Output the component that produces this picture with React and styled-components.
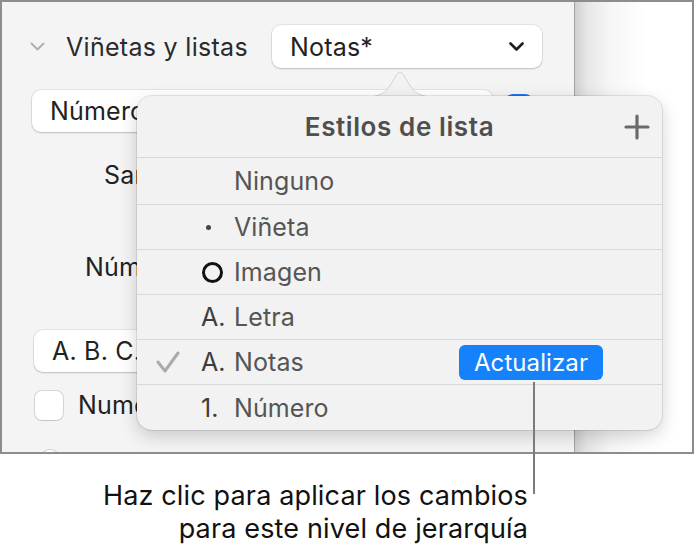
import React from 'react';
import styled, { createGlobalStyle } from 'styled-components';

const GlobalStyle = createGlobalStyle`
  html, body {
    margin: 0;
    padding: 0;
    background: #ffffff;
  }
  body {
    font-family: Inter, "Noto Sans", "Liberation Sans", sans-serif;
    -webkit-font-smoothing: antialiased;
  }
`;

const Page = styled.div`
  position: relative;
  width: 694px;
  height: 553px;
  overflow: hidden;
`;

const Frame = styled.div`
  box-sizing: border-box;
  width: 694px;
  height: 454px;
  border: 2px solid #8d8d8d;
  display: flex;
  overflow: hidden;
`;

const Sidebar = styled.div`
  width: 573px;
  flex: none;
  background: #f4f4f4;
  border-right: 1px solid #a3a3a3;
  padding-left: 28px;
  box-sizing: border-box;
  display: flex;
  flex-direction: column;
  color: #262626;
  font-size: 25px;
`;

const Canvas = styled.div`
  flex: 1;
  background: linear-gradient(90deg, #cfcfcf 0, #e6e6e6 10%, #f6f6f6 30%, #ffffff 60%);
`;

const Row = styled.div`
  margin-top: ${p => p.$mt}px;
  height: ${p => p.$h || 42}px;
  display: flex;
  align-items: center;
  padding-left: ${p => p.$pl || 0}px;
  flex: none;
  white-space: nowrap;
`;

const HeaderRow = styled(Row)`
  display: grid;
  grid-template-columns: 36px 206px 270px;
  align-items: center;
`;

const SectionTitle = styled.span`
  font-size: 25px;
  letter-spacing: 0.3px;
  color: #2b2b2b;
`;

const Dropdown = styled.div`
  box-sizing: border-box;
  height: ${p => p.$h || 43}px;
  width: ${p => p.$w}px;
  margin-left: ${p => p.$ml || 0}px;
  background: #ffffff;
  border-radius: 9px;
  box-shadow: 0 0 0 1px rgba(0, 0, 0, 0.06), 0 1px 2px rgba(0, 0, 0, 0.18);
  display: flex;
  align-items: center;
  justify-content: space-between;
  padding: 0 18px 0 18px;
  font-size: 25px;
  letter-spacing: 0.2px;
  color: #222;
  flex: none;
`;

const BlueWell = styled.div`
  width: 28px;
  height: 30px;
  margin-left: 12px;
  align-self: flex-start;
  margin-top: 4px;
  border-radius: 8px;
  background: #1f78f0;
`;

const Label = styled.span`
  font-size: 25px;
  letter-spacing: 0.2px;
  color: #222;
`;

const Checkbox = styled.div`
  box-sizing: border-box;
  width: 28px;
  height: 29px;
  margin-left: 5px;
  margin-right: 15px;
  border-radius: 7px;
  background: #fff;
  box-shadow: 0 0 0 1px rgba(0, 0, 0, 0.12), 0 1px 1px rgba(0, 0, 0, 0.08);
`;

const Radio = styled.div`
  box-sizing: border-box;
  width: 20px;
  height: 20px;
  margin-left: 10px;
  align-self: flex-start;
  border-radius: 50%;
  background: #fff;
  box-shadow: 0 0 0 1px rgba(0, 0, 0, 0.15);
`;

const Popover = styled.div`
  position: absolute;
  left: 137px;
  top: 96px;
  width: 525px;
  height: 334px;
  box-sizing: border-box;
  background: #f2f2f2;
  border-radius: 15px;
  box-shadow: 0 0 0 1px rgba(0, 0, 0, 0.09), 0 6px 18px rgba(0, 0, 0, 0.18);
  display: flex;
  flex-direction: column;
  overflow: hidden;
`;

const Arrow = styled.svg`
  position: absolute;
  left: 364px;
  top: 69px;
`;

const PopHeader = styled.div`
  height: 61px;
  flex: none;
  display: grid;
  grid-template-columns: 1fr auto 1fr;
  align-items: center;
`;

const PopTitle = styled.div`
  grid-column: 2;
  font-size: 26px;
  font-weight: 600;
  color: #4f4f4f;
  letter-spacing: 0.6px;
`;

const PlusButton = styled.svg`
  grid-column: 3;
  justify-self: end;
  margin-right: 12px;
`;

const StyleRow = styled.div`
  height: ${p => p.$h}px;
  flex: none;
  box-sizing: border-box;
  border-top: 1.5px solid #d8d8d8;
  display: grid;
  grid-template-columns: 64px 33px 1fr auto;
  align-items: center;
  font-size: 25px;
  letter-spacing: 0.1px;
  color: #555555;
`;

const CheckCell = styled.div`
  display: flex;
  justify-content: flex-end;
  padding-right: 21px;
`;

const Marker = styled.div`
  display: flex;
  align-items: center;
  color: #3d3d3d;
`;

const Bullet = styled.span`
  width: 5px;
  height: 5px;
  margin-left: 5px;
  border-radius: 50%;
  background: #444;
`;

const Ring = styled.span`
  box-sizing: border-box;
  width: 21px;
  height: 21px;
  margin-left: 1px;
  border-radius: 50%;
  border: 3px solid #111;
`;

const UpdateButton = styled.div`
  margin-right: 59px;
  width: 144px;
  height: 35px;
  border-radius: 6px;
  background: #1581fa;
  color: #fff;
  font-size: 24px;
  display: flex;
  align-items: center;
  justify-content: center;
`;

const Leader = styled.div`
  position: absolute;
  left: 533px;
  top: 382px;
  width: 1.5px;
  height: 112px;
  background: #7b7b7b;
`;

const Caption = styled.div`
  width: 528px;
  margin-top: 25px;
  text-align: right;
  font-size: 27px;
  line-height: 33px;
  letter-spacing: 0.15px;
  color: #111;
`;

const Chevron = ({ color, w = 15, sw = 2 }) => (
  <svg width={w} height={9} viewBox="0 0 15 9" fill="none">
    <polyline points="1.5,1.5 7.5,7.5 13.5,1.5" stroke={color} strokeWidth={sw} strokeLinecap="round" strokeLinejoin="round" />
  </svg>
);

const styles = [
  { name: 'Ninguno', h: 47 },
  { name: 'Viñeta', h: 45, marker: 'bullet' },
  { name: 'Imagen', h: 45, marker: 'ring' },
  { name: 'Letra', h: 45, marker: 'A.' },
  { name: 'Notas', h: 45, marker: 'A.', checked: true, update: true },
  { name: 'Número', h: 46, marker: '1.' },
];

export default function App() {
  return (
    <Page>
      <GlobalStyle />
      <Frame>
        <Sidebar>
          <HeaderRow $mt={23} $h={43}>
            <Chevron color="#b0b0b0" />
            <SectionTitle>Viñetas y listas</SectionTitle>
            <Dropdown $w={270}>
              <span>Notas*</span>
              <Chevron color="#1e1e1e" w={15} sw={2.6} />
            </Dropdown>
          </HeaderRow>
          <Row $mt={22}>
            <Dropdown $w={461} $h={42} $ml={2}>
              <span>Número</span>
            </Dropdown>
            <BlueWell />
          </Row>
          <Row $mt={22} $pl={74}>
            <Label>Sangría</Label>
          </Row>
          <Row $mt={50} $pl={55}>
            <Label>Número inicial</Label>
          </Row>
          <Row $mt={42}>
            <Dropdown $w={420} $h={42} $ml={4}>
              <span>A. B. C.</span>
            </Dropdown>
          </Row>
          <Row $mt={18} $h={30}>
            <Checkbox />
            <Label>Numeración por niveles</Label>
          </Row>
          <Row $mt={30} $h={20}>
            <Radio />
          </Row>
        </Sidebar>
        <Canvas />
      </Frame>

      <Arrow width="72" height="30" viewBox="0 0 72 30">
        <path d="M0 28 C14 28 20 25 25 18 L33 5 Q36 1 39 5 L47 18 C52 25 58 28 72 28 Z" fill="#f2f2f2" />
        <path d="M0 28 C14 28 20 25 25 18 L33 5 Q36 1 39 5 L47 18 C52 25 58 28 72 28" fill="none" stroke="rgba(0,0,0,0.13)" strokeWidth="1" />
      </Arrow>
      <Popover>
        <PopHeader>
          <PopTitle>Estilos de lista</PopTitle>
          <PlusButton width="26" height="26" viewBox="0 0 26 26">
            <path d="M13 2 V24 M2 13 H24" stroke="#6a6a6a" strokeWidth="3.2" strokeLinecap="round" />
          </PlusButton>
        </PopHeader>
        {styles.map(s => (
          <StyleRow key={s.name} $h={s.h}>
            <CheckCell>
              {s.checked && (
                <svg width="24" height="22" viewBox="0 0 24 22" fill="none">
                  <polyline points="2,11 9,20 22,2" stroke="#ababab" strokeWidth="3" strokeLinecap="round" strokeLinejoin="round" />
                </svg>
              )}
            </CheckCell>
            <Marker>
              {s.marker === 'bullet' && <Bullet />}
              {s.marker === 'ring' && <Ring />}
              {s.marker && s.marker.length === 2 && s.marker}
            </Marker>
            <span>{s.name}</span>
            {s.update ? <UpdateButton>Actualizar</UpdateButton> : <span />}
          </StyleRow>
        ))}
      </Popover>

      <Leader />
      <Caption>
        Haz clic para aplicar los cambios
        <br />
        para este nivel de jerarquía
      </Caption>
    </Page>
  );
}
